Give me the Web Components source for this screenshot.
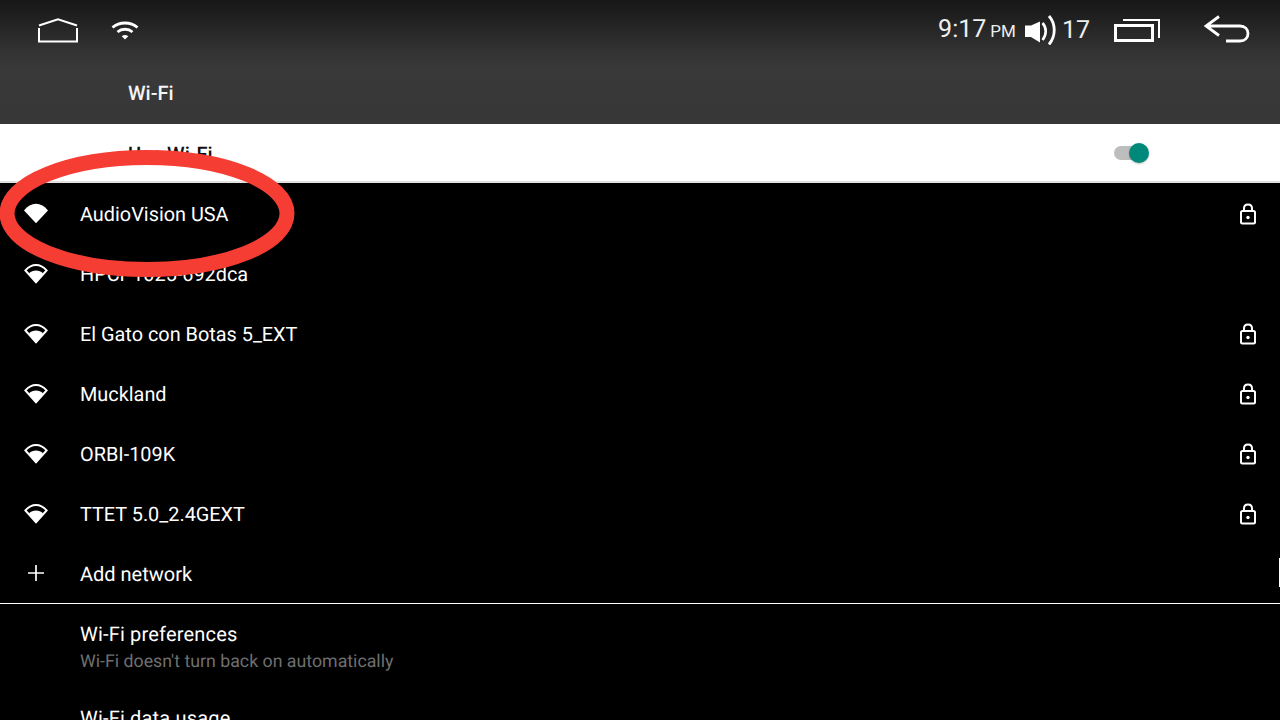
<!DOCTYPE html>
<html lang="en"><head><meta charset="utf-8"><title>Wi-Fi</title>
<style>
html,body{margin:0;padding:0;background:#000;}
body{width:1280px;height:720px;overflow:hidden;font-family:Roboto,"Liberation Sans",sans-serif;color:#fff;position:relative;text-rendering:geometricPrecision;}
</style></head><body>
<wifi-screen>
  <status-header title-text="Wi-Fi"></status-header>
  <toggle-row label="Use Wi-Fi"></toggle-row>
  <network-row name="AudioVision USA" full locked></network-row>
  <network-row name="HPCP1025-692dca"></network-row>
  <network-row name="El Gato con Botas 5_EXT" locked></network-row>
  <network-row name="Muckland" locked></network-row>
  <network-row name="ORBI-109K" locked></network-row>
  <network-row name="TTET 5.0_2.4GEXT" locked></network-row>
  <add-row></add-row>
  <pref-row name="Wi-Fi preferences" sub="Wi-Fi doesn't turn back on automatically"></pref-row>
  <pref-row name="Wi-Fi data usage"></pref-row>
</wifi-screen>
<script>
const WIFI_FULL = `<path d="M0 7.500C3.400 3 7.600 .8 12 .8s8.600 2.200 12 6.700L12 20.200Z" fill="#fff"/>`;
const WIFI_RING = `<path d="M1.400 7.400C4.600 3.800 8 2 12 2s7.400 1.800 10.600 5.400L12 19.200Z" fill="none" stroke="#fff" stroke-width="2"/><path d="M5 10.200C7 8.500 9.400 7.600 12 7.600s5 .9 7 2.600L12 20Z" fill="#fff"/>`;

class WifiScreen extends HTMLElement{
  constructor(){super();this.attachShadow({mode:'open'}).innerHTML=`<style>
  :host{display:block;width:1280px;height:720px;overflow:hidden;position:relative;background:#000}
  .edge{position:absolute;right:0;top:558px;width:1px;height:29px;background:#fff}
  .mark{position:absolute;left:0;top:149px;pointer-events:none}
  </style><slot></slot><div class="edge"></div>
  <svg class="mark" width="296" height="130" viewBox="0 0 296 130"><ellipse cx="147" cy="64.500" rx="140" ry="56" fill="none" stroke="#f63d33" stroke-width="15"/></svg>`;}
}
class StatusHeader extends HTMLElement{
  constructor(){super();this.attachShadow({mode:'open'}).innerHTML=`<style>
  :host{display:block;height:124px;background:linear-gradient(#171717 0,#1d1d1d 12px,#323232 50px,#393939 70px,#373737 124px);color:#fff;font-family:Roboto,"Liberation Sans",sans-serif}
  .bar{height:60px;display:flex;align-items:center;padding:0 30px 0 38px;box-sizing:border-box}
  .wifi{margin-left:33px;margin-top:-1px}
  .spacer{flex:1}
  .time{font-size:25px;font-weight:400;line-height:30px;margin-top:2px;color:#eee;white-space:nowrap}
  .pm{font-size:17px;font-weight:400;margin-left:4px}
  .vol{margin-left:9px;margin-top:0}
  .num{font-size:25px;font-weight:400;line-height:30px;margin-left:5px;margin-top:2px;color:#eee}
  .recent{margin-left:24px;margin-top:1px}
  .back{margin-left:44px;margin-top:-1px}
  .title{padding-left:128px;font-size:20px;font-weight:500;line-height:24px;margin-top:21px;color:#f5f5f5}
  svg{display:block;flex:none}
  </style>
  <div class="bar">
    <svg width="40" height="26" viewBox="0 0 40 26"><path d="M1 8.500 20 2.200 39 8.500" fill="none" stroke="#fff" stroke-width="2"/><path d="M1 11V24.500H39V11" fill="none" stroke="#fff" stroke-width="2"/></svg>
    <svg class="wifi" width="28" height="22" viewBox="0 0 28 22"><path d="M1.500 8.500C8.500 2.500 19.500 2.500 26.500 8.500" fill="none" stroke="#fff" stroke-width="2.800"/><path d="M6.500 13C10.800 9.300 17.200 9.300 21.500 13" fill="none" stroke="#fff" stroke-width="2.800"/><path d="M10.700 17.200C12.700 15.700 15.300 15.700 17.300 17.200L14 20.600Z" fill="#fff"/></svg>
    <div class="spacer"></div>
    <div class="time">9:17<span class="pm">PM</span></div>
    <svg class="vol" width="32" height="30" viewBox="0 0 32 30"><path d="M0 10.500H6L15 6.500V27.500L6 22H0Z" fill="#fff"/><path d="M17.500 8C21.800 12.500 21.800 20 17.500 25" fill="none" stroke="#fff" stroke-width="2.600"/><path d="M24 1C31 9 31 21 24 29.500" fill="none" stroke="#fff" stroke-width="2.800"/></svg>
    <div class="num">17</div>
    <svg class="recent" width="46" height="26" viewBox="0 0 46 26"><path d="M9 2H45V20" fill="none" stroke="#fff" stroke-width="2"/><rect x="1.500" y="7.500" width="37" height="15" fill="none" stroke="#fff" stroke-width="3"/></svg>
    <svg class="back" width="46" height="30" viewBox="0 0 46 30"><path d="M15 1.500 2 11 15 20.500M2 11H36C41 11 44 14.200 44 18.500S41 26 36 26H22" fill="none" stroke="#fff" stroke-width="2.800"/></svg>
  </div>
  <div class="title"></div>`;
  this.shadowRoot.querySelector('.title').textContent=this.getAttribute('title-text');}
}
class ToggleRow extends HTMLElement{
  constructor(){super();this.attachShadow({mode:'open'}).innerHTML=`<style>
  :host{display:block;height:59px;box-sizing:border-box;background:#fff;border-bottom:2px solid #e1e1e1;margin-bottom:1px;color:#111}
  .row{height:57px;display:flex;align-items:center;padding-left:128px;padding-right:132px;font-size:20px;font-weight:500}
  .label{flex:1;position:relative;top:1px}
  .sw{position:relative;width:34px;height:14px;border-radius:7px;background:#bdbdbd}
  .k{position:absolute;right:-1px;top:-3px;width:20px;height:20px;border-radius:50%;background:#00897b;box-shadow:0 1px 2px rgba(0,0,0,.25)}
  </style><div class="row"><span class="label"></span><div class="sw"><div class="k"></div></div></div>`;
  this.shadowRoot.querySelector('.label').textContent=this.getAttribute('label');}
}
class NetworkRow extends HTMLElement{
  constructor(){super();this.attachShadow({mode:'open'}).innerHTML=`<style>
  :host{display:flex;height:60px;align-items:center;padding:0 22px 0 24px;color:#fff;font-size:19.870px;background:#000}
  .ic{width:24px;height:22px;flex:none;margin-top:-1px}
  .name{margin-left:32px;margin-top:2px;flex:1;white-space:nowrap;line-height:24px}
  .lock{flex:none}
  </style><svg class="ic" width="24" height="22" viewBox="0 0 24 22">${this.hasAttribute('full')?WIFI_FULL:WIFI_RING}</svg>
  <span class="name"></span>
  ${this.hasAttribute('locked')?`<svg class="lock" width="20" height="24" viewBox="0 0 20 24"><rect x="3" y="9" width="14" height="12.500" rx="1.500" fill="none" stroke="#fff" stroke-width="2"/><path d="M6 9V6.500C6 4 7.800 2.500 10 2.500S14 4 14 6.500V9" fill="none" stroke="#fff" stroke-width="2"/><circle cx="10" cy="15.500" r="1.700" fill="#fff"/></svg>`:''}`;
  this.shadowRoot.querySelector('.name').textContent=this.getAttribute('name');}
}
class AddRow extends HTMLElement{
  constructor(){super();this.attachShadow({mode:'open'}).innerHTML=`<style>
  :host{display:flex;height:60px;box-sizing:border-box;align-items:center;padding:0 0 0 24px;font-size:20px;color:#fff;border-bottom:1px solid #fff;background:#000}
  svg{flex:none;margin-top:-1px}
  span{margin-left:32px;line-height:24px;margin-top:1px}
  </style><svg width="24" height="24" viewBox="0 0 24 24"><path d="M12 4V20M4 12H20" stroke="#fff" stroke-width="1.700" fill="none"/></svg><span>Add network</span>`;}
}
class PrefRow extends HTMLElement{
  constructor(){super();this.attachShadow({mode:'open'}).innerHTML=`<style>
  :host{display:block;padding:18px 0 0 80px;height:84px;box-sizing:border-box;color:#fff;background:#000}
  .n{font-size:20px;line-height:24px;letter-spacing:.18px}
  .s{font-size:17.750px;line-height:22px;color:#6f6f6f;margin-top:5px}
  </style><div class="n"></div><div class="s"></div>`;
  this.shadowRoot.querySelector('.n').textContent=this.getAttribute('name');
  const s=this.shadowRoot.querySelector('.s');
  if(this.getAttribute('sub'))s.textContent=this.getAttribute('sub');else s.remove();}
}
customElements.define('wifi-screen',WifiScreen);
customElements.define('status-header',StatusHeader);
customElements.define('toggle-row',ToggleRow);
customElements.define('network-row',NetworkRow);
customElements.define('add-row',AddRow);
customElements.define('pref-row',PrefRow);
</script>
</body></html>
